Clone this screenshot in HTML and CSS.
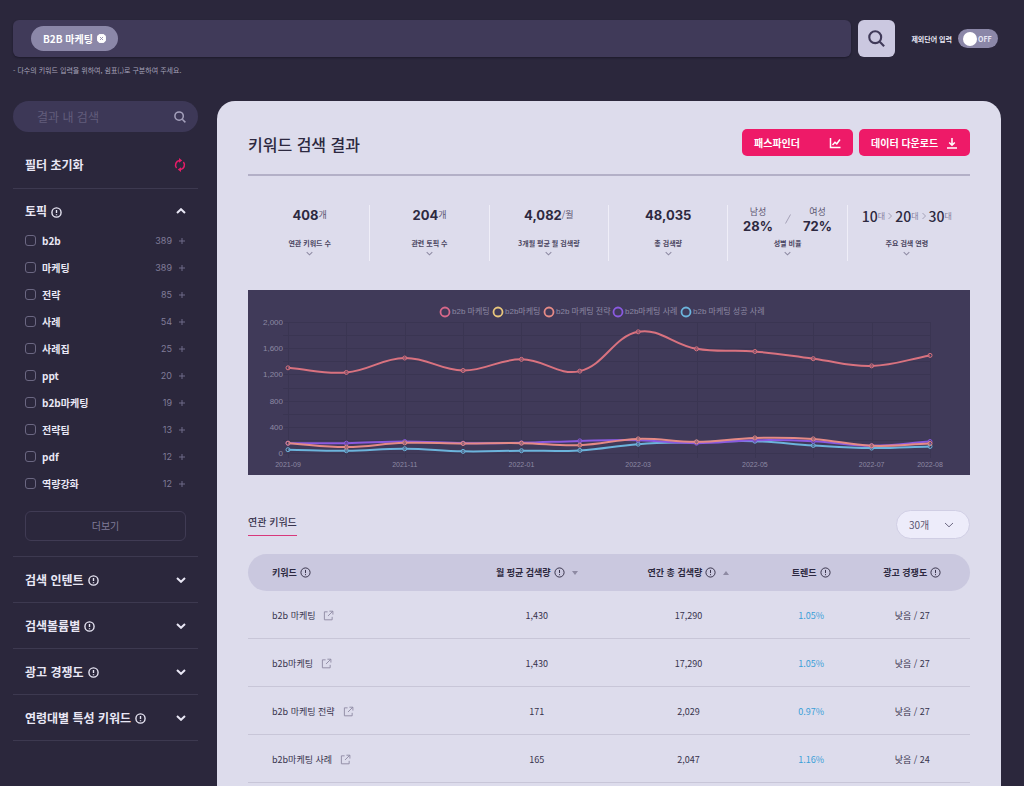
FILE: index.html
```html
<!DOCTYPE html>
<html lang="ko">
<head>
<meta charset="utf-8">
<meta name="viewport" content="width=device-width, initial-scale=1">
<title>키워드 검색 결과</title>
<link rel="stylesheet" href="styles.css">
</head>
<body>
<svg class="sprite" aria-hidden="true">
  <symbol id="i-search" viewBox="0 0 16 16"><circle cx="6.8" cy="6.8" r="5.6"/><path d="M11 11l4.2 4.2"/></symbol>
  <symbol id="i-info" viewBox="0 0 12 12"><circle cx="6" cy="6" r="5"/><path d="M6 3.2v3.4M6 7.8v1.1"/></symbol>
  <symbol id="i-down" viewBox="0 0 10 6"><path d="M1 1l4 3.8L9 1"/></symbol>
  <symbol id="i-up" viewBox="0 0 10 6"><path d="M1 5l4-3.8L9 5"/></symbol>
  <symbol id="i-link" viewBox="0 0 12 12"><path d="M5 2H1.5v8.700H10V7.500M5.500 6.500L10.600 1.400M7 1.300h3.800V5"/></symbol>
  <symbol id="i-plus" viewBox="0 0 8 8"><path d="M4 1v6M1 4h6"/></symbol>
</svg>

<header class="topbar">
  <form class="search-form">
    <div class="search-field">
      <span class="chip">B2B 마케팅
        <button class="chip-remove" type="button" aria-label="B2B 마케팅 삭제"><svg viewBox="0 0 10 10"><circle cx="5" cy="5" r="5" fill="#fff"/><path d="M3.300 3.300l3.400 3.400M6.700 3.300L3.300 6.700" stroke="#8f8bac" stroke-width="1"/></svg></button>
      </span>
      <input class="search-input" type="text" aria-label="키워드 입력">
    </div>
    <button class="search-button" type="button" aria-label="검색"><svg class="icon"><use href="#i-search"/></svg></button>
    <label class="exclude">
      <span>제외단어 입력</span>
      <span class="switch"><input class="switch-input" type="checkbox" role="switch"><span class="switch-text">OFF</span></span>
    </label>
  </form>
  <p class="hint">- 다수의 키워드 입력을 위하여, 쉼표(,)로 구분하여 주세요.</p>
</header>

<div class="layout">
  <aside class="sidebar">
    <div class="side-search">
      <input class="side-search-input" type="text" placeholder="결과 내 검색" aria-label="결과 내 검색">
      <button class="side-search-button" type="button" aria-label="찾기"><svg class="icon"><use href="#i-search"/></svg></button>
    </div>
    <button class="reset" type="button"><span>필터 초기화</span>
      <svg class="reset-icon" viewBox="0 0 12 14"><path d="M2.600 10A4.700 4.700 0 0 1 5.500 2.400M9.400 4A4.700 4.700 0 0 1 6.500 11.600"/><path class="solid" d="M5 0l3.200 2.400L5 4.800zM7 14l-3.200-2.400L7 9.200z"/></svg>
    </button>

    <section class="topic">
      <button class="topic-head" type="button" aria-expanded="true"><span class="title">토픽 <svg class="info"><use href="#i-info"/></svg></span><svg class="caret"><use href="#i-up"/></svg></button>
      <ul class="topics">
        <li><label><input type="checkbox">b2b</label><span class="count">389</span><button type="button" aria-label="b2b 추가"><svg><use href="#i-plus"/></svg></button></li>
        <li><label><input type="checkbox">마케팅</label><span class="count">389</span><button type="button" aria-label="마케팅 추가"><svg><use href="#i-plus"/></svg></button></li>
        <li><label><input type="checkbox">전략</label><span class="count">85</span><button type="button" aria-label="전략 추가"><svg><use href="#i-plus"/></svg></button></li>
        <li><label><input type="checkbox">사례</label><span class="count">54</span><button type="button" aria-label="사례 추가"><svg><use href="#i-plus"/></svg></button></li>
        <li><label><input type="checkbox">사례집</label><span class="count">25</span><button type="button" aria-label="사례집 추가"><svg><use href="#i-plus"/></svg></button></li>
        <li><label><input type="checkbox">ppt</label><span class="count">20</span><button type="button" aria-label="ppt 추가"><svg><use href="#i-plus"/></svg></button></li>
        <li><label><input type="checkbox">b2b마케팅</label><span class="count">19</span><button type="button" aria-label="b2b마케팅 추가"><svg><use href="#i-plus"/></svg></button></li>
        <li><label><input type="checkbox">전략팀</label><span class="count">13</span><button type="button" aria-label="전략팀 추가"><svg><use href="#i-plus"/></svg></button></li>
        <li><label><input type="checkbox">pdf</label><span class="count">12</span><button type="button" aria-label="pdf 추가"><svg><use href="#i-plus"/></svg></button></li>
        <li><label><input type="checkbox">역량강화</label><span class="count">12</span><button type="button" aria-label="역량강화 추가"><svg><use href="#i-plus"/></svg></button></li>
      </ul>
      <button class="more" type="button">더보기</button>
    </section>
    <button class="section" type="button" aria-expanded="false"><span class="title">검색 인텐트 <svg class="info"><use href="#i-info"/></svg></span><svg class="caret"><use href="#i-down"/></svg></button>
    <button class="section" type="button" aria-expanded="false"><span class="title">검색볼륨별 <svg class="info"><use href="#i-info"/></svg></span><svg class="caret"><use href="#i-down"/></svg></button>
    <button class="section" type="button" aria-expanded="false"><span class="title">광고 경쟁도 <svg class="info"><use href="#i-info"/></svg></span><svg class="caret"><use href="#i-down"/></svg></button>
    <button class="section" type="button" aria-expanded="false"><span class="title">연령대별 특성 키워드 <svg class="info"><use href="#i-info"/></svg></span><svg class="caret"><use href="#i-down"/></svg></button>
  </aside>

  <main class="panel">
    <div class="panel-head">
      <h1>키워드 검색 결과</h1>
      <div class="actions">
        <button class="action" type="button">패스파인더 <svg viewBox="0 0 12 12"><path d="M1.500 1v9.500H11.500M3.500 8l2.500-2.700 1.800 1.500L11 2.500"/></svg></button>
        <button class="action" type="button">데이터 다운로드 <svg viewBox="0 0 12 12"><path d="M6 1v7M3.200 5.500L6 8.300l2.800-2.800M1 11h10"/></svg></button>
      </div>
    </div>

    <div class="stats">
      <div class="stat"><div class="value"><b>408</b>개</div><div class="label">연관 키워드 수</div><svg class="tick"><use href="#i-down"/></svg></div>
      <div class="stat"><div class="value"><b>204</b>개</div><div class="label">관련 토픽 수</div><svg class="tick"><use href="#i-down"/></svg></div>
      <div class="stat"><div class="value"><b>4,082</b>/월</div><div class="label">3개월 평균 월 검색량</div><svg class="tick"><use href="#i-down"/></svg></div>
      <div class="stat"><div class="value"><b>48,035</b></div><div class="label">총 검색량</div><svg class="tick"><use href="#i-down"/></svg></div>
      <div class="stat"><div class="value gender"><div>남성<b>28%</b></div><svg class="slash" viewBox="0 0 6 10"><path d="M5.500 .5l-5 9"/></svg><div>여성<b>72%</b></div></div><div class="label">성별 비율</div><svg class="tick"><use href="#i-down"/></svg></div>
      <div class="stat"><div class="value ages"><strong>10</strong>대<svg viewBox="0 0 4 8"><path d="M.5 1l3 3-3 3"/></svg><strong>20</strong>대<svg viewBox="0 0 4 8"><path d="M.5 1l3 3-3 3"/></svg><strong>30</strong>대</div><div class="label">주요 검색 연령</div><svg class="tick"><use href="#i-down"/></svg></div>
    </div>

    <svg class="chart" id="chart" viewBox="0 0 722 185" role="img" aria-label="월별 검색량"></svg>

    <div class="list-head">
      <h2>연관 키워드</h2>
      <span class="select-wrap">
        <select class="select" aria-label="표시 개수"><option>30개</option><option>50개</option></select>
        <svg class="select-caret"><use href="#i-down"/></svg>
      </span>
    </div>

    <table class="keywords">
      <thead>
        <tr>
          <th class="c-key" scope="col"><span class="th">키워드 <svg class="info"><use href="#i-info"/></svg></span></th>
          <th class="c-month" scope="col"><span class="th">월 평균 검색량 <svg class="info"><use href="#i-info"/></svg><svg class="sort" viewBox="0 0 6 4"><path d="M0 0h6L3 4z"/></svg></span></th>
          <th class="c-year" scope="col"><span class="th">연간 총 검색량 <svg class="info"><use href="#i-info"/></svg><svg class="sort" viewBox="0 0 6 4"><path d="M0 4h6L3 0z"/></svg></span></th>
          <th class="c-trend" scope="col"><span class="th">트렌드 <svg class="info"><use href="#i-info"/></svg></span></th>
          <th class="c-ad" scope="col"><span class="th">광고 경쟁도 <svg class="info"><use href="#i-info"/></svg></span></th>
        </tr>
      </thead>
      <tbody>
        <tr><td><a href="#k1">b2b 마케팅 <svg><use href="#i-link"/></svg></a></td><td>1,430</td><td>17,290</td><td class="trend">1.05%</td><td>낮음 / 27</td></tr>
        <tr><td><a href="#k2">b2b마케팅 <svg><use href="#i-link"/></svg></a></td><td>1,430</td><td>17,290</td><td class="trend">1.05%</td><td>낮음 / 27</td></tr>
        <tr><td><a href="#k3">b2b 마케팅 전략 <svg><use href="#i-link"/></svg></a></td><td>171</td><td>2,029</td><td class="trend">0.97%</td><td>낮음 / 27</td></tr>
        <tr><td><a href="#k4">b2b마케팅 사례 <svg><use href="#i-link"/></svg></a></td><td>165</td><td>2,047</td><td class="trend">1.16%</td><td>낮음 / 24</td></tr>
      </tbody>
    </table>
  </main>
</div>
<script src="chart.js"></script>
</body>
</html>
```
FILE: styles.css
```css
* { box-sizing: border-box; }

body {
  margin: 0;
  min-height: 100vh;
  display: flex;
  flex-direction: column;
  background: #2b273c;
  color: #e9e7f5;
  font-family: "Noto Sans CJK KR", sans-serif;
  font-size: 10px;
  line-height: 16px;
}

button, input, select { font: inherit; color: inherit; }
button { padding: 0; border: 0; background: none; cursor: pointer; }
svg { display: block; flex: none; fill: none; stroke: currentColor; }
h1, h2, p, ul { margin: 0; padding: 0; }
.sprite { position: absolute; width: 0; height: 0; }

/* top bar */
.topbar { padding: 20px 26px 24px 13px; }
.search-form { display: flex; align-items: center; }
.search-field {
  flex: 1;
  display: flex;
  align-items: center;
  height: 37px;
  padding: 0 18px;
  background: #403a59;
  border-radius: 6px;
  box-shadow: 0 1px 2px #1d1a2b;
}
.chip {
  display: flex;
  align-items: center;
  gap: 4px;
  height: 25px;
  padding: 0 12px;
  border-radius: 13px;
  background: #8b87a8;
  color: #fff;
  font-weight: 700;
}
.chip-remove svg { width: 9px; height: 9px; }
.search-input { flex: 1; min-width: 0; border: 0; background: none; outline: 0; }
.search-button {
  display: grid;
  place-items: center;
  width: 37px;
  height: 37px;
  margin-left: 7px;
  border-radius: 6px;
  background: #cbc8e0;
  color: #403a59;
}
.search-button .icon { width: 17px; height: 17px; stroke-width: 2; }
.exclude {
  display: flex;
  align-items: center;
  gap: 6px;
  margin-left: 16px;
  font-size: 7px;
  font-weight: 700;
}
.switch {
  display: flex;
  align-items: center;
  gap: 1px;
  width: 40px;
  height: 19px;
  padding-left: 5px;
  border-radius: 10px;
  background: #8b87a8;
}
.switch-input {
  appearance: none;
  width: 14px;
  height: 14px;
  margin: 0;
  border-radius: 50%;
  background: #fff;
}
.hint { margin-top: 6px; color: #a6a3ba; font-size: 7px; line-height: 14px; }

.layout { flex: 1; display: flex; gap: 19px; padding: 0 23px 0 13px; }

/* filters */
.sidebar { flex: none; width: 185px; }
.side-search {
  display: flex;
  align-items: center;
  height: 31px;
  padding: 0 12px 0 24px;
  border-radius: 16px;
  background: #3d3857;
}
.side-search-input {
  flex: 1;
  min-width: 0;
  padding: 0;
  border: 0;
  outline: 0;
  background: none;
  font-size: 12px;
}
.side-search-input::placeholder { color: #625d7c; opacity: 1; }
.side-search-button { color: #a5a1bc; }
.side-search-button .icon { width: 12px; height: 12px; stroke-width: 2; }
.reset, .topic-head, .section {
  display: flex;
  align-items: center;
  justify-content: space-between;
  width: 100%;
  padding: 0 12px;
  font-size: 12px;
  font-weight: 700;
}
.reset { height: 57px; padding-top: 10px; border-bottom: 1px solid #3d3950; }
.reset-icon { width: 12px; height: 14px; color: #e81c68; stroke-width: 1.5; }
.solid { fill: currentColor; stroke: none; }
.topic-head { height: 38px; padding-top: 6px; }
.title { display: flex; align-items: center; gap: 4px; }
.info { width: 11px; height: 11px; stroke-width: 1; }
.title .info { margin-top: 2px; stroke-width: 1.5; }
.caret { width: 10px; height: 6px; stroke-width: 2; }
.topic { border-bottom: 1px solid #3d3950; padding-bottom: 15px; }
.topics { list-style: none; padding: 0 12px; }
.topics li { display: flex; align-items: center; height: 27px; }
.topics label { flex: 1; display: flex; align-items: center; gap: 6px; font-weight: 700; }
.topics input {
  appearance: none;
  width: 11px;
  height: 11px;
  margin: 0;
  border: 1px solid #6b6782;
  border-radius: 3px;
}
.topics input:checked { background: #77738f; }
.count { color: #807c98; font: 9px/16px Inter, sans-serif; }
.topics button { margin-left: 6px; color: #6f6b88; }
.topics button svg { width: 8px; height: 8px; }
.more {
  display: block;
  width: 161px;
  height: 30px;
  margin: 14px 12px 0;
  border: 1px solid #403b54;
  border-radius: 6px;
  color: #807c98;
}
.section { height: 46px; border-bottom: 1px solid #3d3950; }

/* results */
.panel {
  flex: 1;
  min-width: 0;
  padding: 28px 31px 0;
  border-radius: 18px 18px 0 0;
  background: #dddcec;
  color: #38334c;
}
.panel-head {
  display: flex;
  justify-content: space-between;
  padding-bottom: 15px;
  border-bottom: 2px solid #b3b0c7;
}
h1 { font-size: 16px; line-height: 30px; font-weight: 500; color: #2d2940; }
.actions { display: flex; gap: 6px; }
.action {
  display: flex;
  align-items: center;
  justify-content: space-between;
  width: 111px;
  height: 27px;
  padding: 0 12px;
  border-radius: 5px;
  background: #ee1a68;
  color: #fff;
  font-weight: 700;
}
.action svg { width: 12px; height: 12px; stroke-width: 1.5; }
.stats { display: grid; grid-template-columns: repeat(6, 1fr); padding: 29px 4px 29px 2px; }
.stat { display: flex; flex-direction: column; align-items: center; height: 56px; white-space: nowrap; }
.stat + .stat { border-left: 1px solid #efeef8; }
.value { display: flex; align-items: center; height: 20px; font-size: 9px; color: #5d5973; }
.value b { font: 700 13px/14px Inter, sans-serif; color: #2d2940; }
.label { margin-top: 11px; font-size: 7px; line-height: 15px; font-weight: 700; color: #4b4661; }
.tick { width: 7px; height: 5px; color: #8e8aa3; stroke-width: 1.5; }
.gender { gap: 12px; padding-top: 8px; line-height: 14px; text-align: center; }
.gender b { display: block; }
.slash { width: 6px; height: 10px; color: #a5a2b8; stroke-width: 1; }
.ages { padding-top: 2px; font-size: 8px; color: #8581a0; }
.ages strong { font-size: 14px; font-weight: 500; color: #2d2940; }
.ages svg { width: 4px; height: 8px; margin: 0 3px; color: #a5a2b8; stroke-width: 1; }

.chart { width: 100%; height: auto; background: #403a59; }
.chart text { fill: #8d89a3; stroke: none; font: 8px "Liberation Sans", "Noto Sans CJK KR", sans-serif; }
.chart .date { font-size: 7px; }
.grid { stroke: #3a3552; stroke-width: 1; }

.list-head { display: flex; justify-content: space-between; padding: 35px 0 15px; }
h2 { align-self: flex-start; padding: 4px 0 5px; border-bottom: 1px solid #d8387b; font-size: 10px; line-height: 16px; font-weight: 500; }
.select-wrap { display: grid; align-items: center; }
.select {
  grid-area: 1 / 1;
  appearance: none;
  width: 74px;
  height: 29px;
  padding: 0 12px;
  border: 1px solid #d0cee4;
  border-radius: 15px;
  background: #edecfa;
  color: #5a556f;
}
.select-caret { grid-area: 1 / 1; justify-self: end; width: 10px; height: 6px; margin-right: 16px; color: #6d6984; pointer-events: none; }

.keywords { width: 100%; table-layout: fixed; border-collapse: separate; border-spacing: 0; font-size: 9px; text-align: center; }
.keywords th { height: 37px; padding: 0; background: #cac8df; font-weight: 700; color: #2d2940; }
.keywords th:first-child { border-radius: 19px 0 0 19px; }
.keywords th:last-child { border-radius: 0 19px 19px 0; }
.keywords td { height: 48px; padding: 2px 0 0; border-bottom: 1px solid #c8c6d8; }
.keywords th:first-child, .keywords td:first-child { padding-left: 24px; text-align: left; }
.th { display: inline-flex; align-items: center; gap: 3px; vertical-align: middle; }
.sort { width: 6px; height: 4px; margin-left: 4px; fill: #8e8aa3; stroke: none; }
.c-key { width: 30%; }
.c-month { width: 20%; }
.c-year { width: 22%; }
.c-trend { width: 12%; }
.c-ad { width: 16%; }
.keywords a { display: inline-flex; align-items: center; gap: 8px; vertical-align: middle; color: inherit; text-decoration: none; }
.keywords a svg { width: 11px; height: 11px; color: #8e8aa3; }
.keywords .trend { color: #3a9fd8; }
```
FILE: chart.js
```js
const chart = document.getElementById('chart');
const NS = 'http://www.w3.org/2000/svg';
const left = 40, right = 682, top_ = 32, bottom = 163, max = 2000;
const months = ['2021-09', '', '2021-11', '', '2022-01', '', '2022-03', '', '2022-05', '', '2022-07', '2022-08'];
const main = [1300, 1230, 1450, 1260, 1430, 1250, 1850, 1590, 1550, 1440, 1330, 1490];
const series = [
  { name: 'b2b 성공', color: '#6cb4dc', data: [50, 35, 65, 25, 35, 40, 135, 165, 180, 115, 75, 100] },
  { name: '사례', color: '#8a5ae0', data: [150, 150, 175, 150, 155, 185, 195, 150, 195, 180, 110, 175] },
  { name: '전략', color: '#e58a86', data: [150, 90, 155, 145, 150, 120, 215, 170, 230, 215, 110, 145] },
  { name: 'b2b', color: '#d9727f', data: main }
];
const legend = [
  [197, 'b2b 마케팅', '#d8688a'], [250, 'b2b마케팅', '#e8c67c'], [301, 'b2b 마케팅 전략', '#e58a86'],
  [370, 'b2b마케팅 사례', '#8a5ae0'], [438, 'b2b 마케팅 성공 사례', '#6cb4dc']
];

function add(tag, attrs, text) {
  const el = document.createElementNS(NS, tag);
  for (const key in attrs) el.setAttribute(key, attrs[key]);
  if (text) el.textContent = text;
  chart.appendChild(el);
}
const px = i => left + (right - left) * i / (months.length - 1);
const py = v => bottom - (bottom - top_) * v / max;

for (let v = 0; v <= max; v += 200) {
  add('path', { class: 'grid', d: `M${left - 5} ${Math.round(py(v)) + 0.5}H${right}` });
  if (v % 400 === 0) add('text', { x: 35, y: py(v) + 3, 'text-anchor': 'end' }, v.toLocaleString('en-US'));
}
months.forEach((m, i) => {
  add('path', { class: 'grid', d: `M${Math.round(px(i)) + 0.5} ${top_}V${bottom + 5}` });
  if (m) add('text', { class: 'date', x: px(i), y: 177, 'text-anchor': 'middle' }, m);
});

// Smooth line through the points, tension 0.4
function curve(pts) {
  const ctrl = pts.map((p, i) => {
    const a = pts[i - 1] || p, b = pts[i + 1] || p;
    const d1 = Math.hypot(p[0] - a[0], p[1] - a[1]), d2 = Math.hypot(b[0] - p[0], b[1] - p[1]);
    const f1 = 0.4 * d1 / (d1 + d2), f2 = 0.4 * d2 / (d1 + d2);
    return [p[0] - f1 * (b[0] - a[0]), p[1] - f1 * (b[1] - a[1]), p[0] + f2 * (b[0] - a[0]), p[1] + f2 * (b[1] - a[1])];
  });
  return pts.map((p, i) => i === 0 ? `M${p}` : `C${ctrl[i - 1].slice(2)} ${ctrl[i].slice(0, 2)} ${p}`).join('');
}
series.forEach(s => {
  const pts = s.data.map((v, i) => [px(i), py(v)]);
  add('path', { d: curve(pts), stroke: s.color, 'stroke-width': 2 });
  pts.forEach(p => add('circle', { cx: p[0], cy: p[1], r: 2, stroke: s.color, 'stroke-width': 1, fill: '#403a59', 'fill-opacity': 0.4 }));
});
legend.forEach(([x, name, color]) => {
  add('circle', { cx: x, cy: 22, r: 4.5, stroke: color, 'stroke-width': 1.8 });
  add('text', { x: x + 7, y: 24 }, name);
});
```
